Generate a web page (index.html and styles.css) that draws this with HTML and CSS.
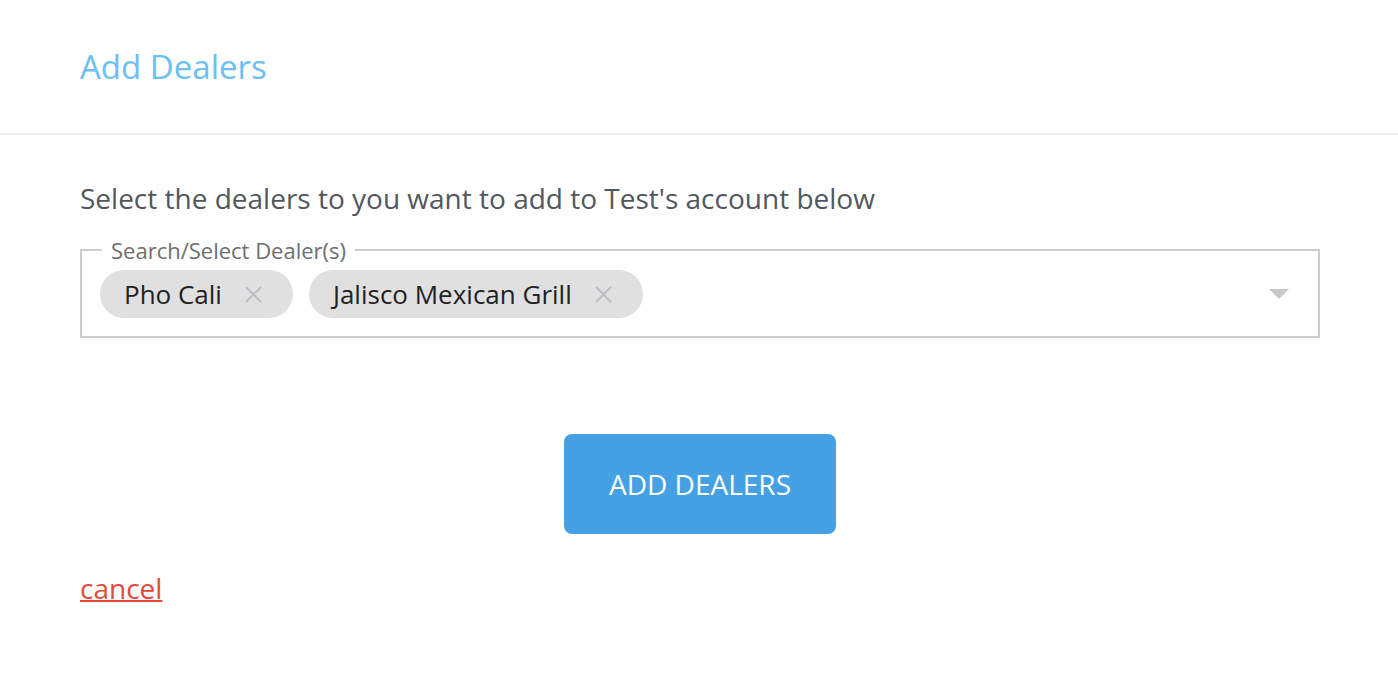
FILE: index.html
```html
<!DOCTYPE html>
<html>
<head>
<meta charset="utf-8">
<link rel="stylesheet" href="styles.css">
</head>
<body>
<header class="header">
  <h1 class="title">Add Dealers</h1>
</header>
<main class="content">
  <p class="intro">Select the dealers to you want to add to Test's account below</p>
  <fieldset class="select">
    <legend class="legend">Search/Select Dealer(s)</legend>
    <div class="chips">
      <span class="chip">Pho Cali<svg class="chip-x" viewBox="0 0 20 20"><path d="M2 2L18 18M18 2L2 18"/></svg></span>
      <span class="chip">Jalisco Mexican Grill<svg class="chip-x" viewBox="0 0 20 20"><path d="M2 2L18 18M18 2L2 18"/></svg></span>
    </div>
    <svg class="caret" viewBox="0 0 20 10"><path d="M0 0H20L10 10Z"/></svg>
  </fieldset>
  <div class="actions">
    <button class="btn">ADD DEALERS</button>
  </div>
  <a class="cancel" href="#">cancel</a>
</main>
</body>
</html>
```
FILE: styles.css
```css
* { box-sizing: border-box; }
html, body { margin: 0; padding: 0; background: #fff; }
body { font-family: "Open Sans", "Noto Sans", sans-serif; }
.header {
  height: 135px;
  border-bottom: 2px solid #eeeeee;
  padding: 0 80px;
  display: flex;
  align-items: flex-start;
}
.title {
  margin: 45px 0 0;
  font-size: 33px;
  font-weight: 400;
  line-height: 44px;
  color: #6cc0f2;
}
.content { padding: 0 78px 0 80px; }
.intro {
  margin: 44px 0 0;
  font-size: 28px;
  line-height: 38px;
  color: #52575e;
}
.select {
  margin: 20px 0 0;
  padding: 7px 18px 18px;
  border: 2px solid #cbcfd2;
  display: flex;
  align-items: center;
  min-width: 0;
}
.legend {
  padding: 0 9px;
  margin-left: 2px;
  font-size: 22px;
  line-height: 26px;
  color: #6d6e70;
}
.chips { display: flex; gap: 16px; flex: 1; }
.chip {
  display: inline-flex;
  align-items: center;
  height: 48px;
  padding: 0 30px 0 24px;
  border-radius: 24px;
  background: #e0e0e0;
  font-size: 26px;
  color: #222;
}
.chip-x {
  width: 19px;
  height: 19px;
  margin-left: 22px;
  fill: none;
  stroke: #b9bdc1;
  stroke-width: 2;
}
.caret {
  width: 20px;
  height: 10px;
  fill: #c5c9cd;
  margin-right: 11px;
}
.actions {
  display: flex;
  justify-content: center;
  margin-top: 96px;
}
.btn {
  width: 272px;
  height: 100px;
  border: none;
  border-radius: 8px;
  background: #45a1e3;
  color: #fff;
  font-family: "Open Sans", "Noto Sans", sans-serif;
  font-size: 28px;
  cursor: pointer;
}
.cancel {
  display: inline-block;
  margin-top: 36px;
  font-size: 28px;
  line-height: 36px;
  color: #e04c3c;
  text-decoration: underline;
  text-decoration-thickness: 2px;
}
```
